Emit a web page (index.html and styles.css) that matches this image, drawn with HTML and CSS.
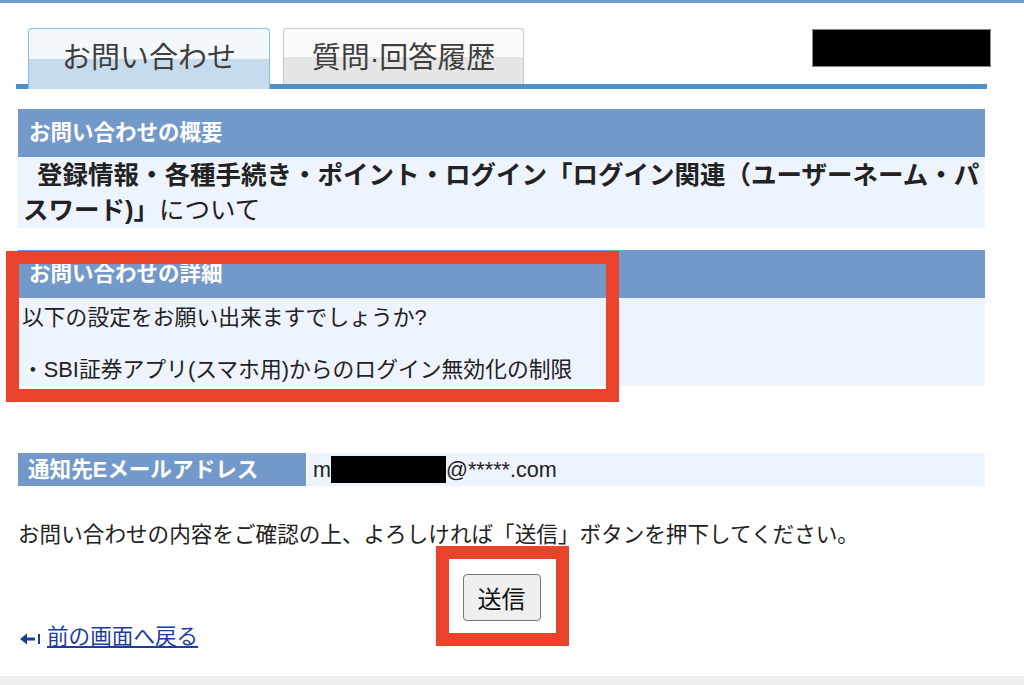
FILE: index.html
```html
<!DOCTYPE html>
<html>
<head>
    <meta charset="UTF-8">
    <title>お問い合わせ</title>
    <link rel="stylesheet" href="styles.css">
</head>
<body>
<div class="top_bar"></div>
<div class="page">
    <div class="tab_row">
        <div class="tab active">お問い合わせ</div>
        <div class="tab">質問·回答履歴</div>
        <div class="user_mask"></div>
    </div>

    <div class="section first">
        <div class="sec_title">お問い合わせの概要</div>
        <div class="sec_body summary">
            <b>登録情報・各種手続き・ポイント・ログイン「ログイン関連（ユーザーネーム・パ<br>スワード)」</b>について
        </div>
    </div>

    <div class="section detail">
        <div class="sec_title">お問い合わせの詳細</div>
        <div class="sec_body message">
            以下の設定をお願い出来ますでしょうか?<br>
            <br>
            ・SBI証券アプリ(スマホ用)からのログイン無効化の制限
        </div>
        <div class="red_mark detail_mark"></div>
    </div>

    <div class="mail_row">
        <div class="mail_label">通知先Eメールアドレス</div>
        <div class="mail_value">m<span class="mask"></span>@*****.com</div>
    </div>

    <p class="notice">お問い合わせの内容をご確認の上、よろしければ「送信」ボタンを押下してください。</p>

    <div class="submit_row">
        <span class="submit_wrap">
            <button class="submit" type="button">送信</button>
            <span class="red_mark button_mark"></span>
        </span>
    </div>

    <div class="back">
        <svg class="back_icon" width="21" height="14" viewBox="0 0 21 14">
            <path d="M0 7 L7 1.5 L7 12.5 Z" fill="#1d3d9b"/>
            <rect x="6" y="5.5" width="9" height="3" fill="#1d3d9b"/>
            <rect x="18" y="2" width="2" height="10" fill="#1d3d9b"/>
        </svg>
        <a href="#" class="back_link">前の画面へ戻る</a>
    </div>
</div>
<div class="bottom_bar"></div>
</body>
</html>
```

FILE: styles.css
```css
            body {
                margin: 0;
                font-family: "Liberation Sans", "Noto Sans CJK JP", sans-serif;
                color: #222;
                background: #fff;
                overflow: hidden;
            }
            .top_bar {
                height: 3px;
                background: #7399ca;
            }
            .page {
                width: 967px;
                margin-left: 18px;
            }
            /* tabs */
            .tab_row {
                display: flex;
                align-items: flex-start;
                width: 971px;
                height: 56px;
                margin-left: -2px;
                padding-top: 25px;
                border-bottom: 5px solid #4f8fc8;
            }
            .tab {
                box-sizing: border-box;
                width: 241px;
                height: 56px;
                margin-left: 13px;
                border: 1px solid #c9c9c9;
                border-bottom: none;
                border-radius: 4px 4px 0 0;
                background: linear-gradient(#fafafa 50%, #e6e6e6 50%);
                text-align: center;
                font-size: 29px;
                line-height: 58px;
                color: #3f3f3f;
            }
            .tab.active {
                width: 242px;
                height: 61px;
                margin-left: 12px;
                border-color: #8fbde0;
                background: linear-gradient(#f3f8fc 50%, #c6dcec 50%);
            }
            .user_mask {
                box-sizing: border-box;
                width: 179px;
                height: 38px;
                margin: 1px -4px 0 auto;
                background: #000;
                border: 1px solid #888;
            }
            /* sections */
            .section {
                position: relative;
            }
            .section.first {
                margin-top: 20px;
            }
            .section.detail {
                margin-top: 22px;
            }
            .sec_title {
                height: 48px;
                padding-left: 11px;
                background: #7399ca;
                color: #fff;
                font-weight: bold;
                font-size: 21.5px;
                line-height: 48px;
            }
            .sec_body {
                background: #edf4fd;
            }
            .summary {
                padding: 1px 0 0 5px;
                font-size: 25.5px;
                line-height: 35px;
                text-indent: 14px;
            }
            .summary b {
                font-weight: bold;
            }
            .message {
                padding: 7px 4px 3px 4px;
                font-size: 21.8px;
                line-height: 26px;
            }
            .red_mark {
                position: absolute;
                border: 13px solid #e9432b;
            }
            .detail_mark {
                left: -12px;
                top: 1px;
                width: 587px;
                height: 125px;
            }
            /* mail */
            .mail_row {
                display: flex;
                height: 33px;
                margin-top: 67px;
                font-size: 21.6px;
                line-height: 33px;
            }
            .mail_label {
                width: 278px;
                padding-left: 10px;
                background: #7399ca;
                color: #fff;
                font-weight: bold;
            }
            .mail_value {
                flex: 1;
                margin-left: 1px;
                padding-left: 6px;
                background: #edf4fd;
            }
            .mask {
                display: inline-block;
                width: 115px;
                height: 27px;
                background: #000;
                vertical-align: -6px;
            }
            .notice {
                margin: 34px 0 0 0;
                font-size: 21.6px;
                line-height: 30px;
            }
            /* submit */
            .submit_row {
                margin-top: 24px;
                text-align: center;
                height: 47px;
            }
            .submit_wrap {
                position: relative;
                display: inline-block;
                vertical-align: top;
            }
            .submit {
                display: block;
                width: 78px;
                height: 47px;
                padding: 0;
                background: #efefef;
                border: 1px solid #767676;
                border-radius: 4px;
                font-family: "Liberation Sans", "Noto Sans CJK JP", sans-serif;
                font-size: 24px;
                color: #111;
            }
            .button_mark {
                left: -27px;
                top: -28px;
                right: -28px;
                bottom: -25px;
            }
            /* back link */
            .back {
                display: flex;
                align-items: center;
                height: 32px;
                margin-left: 2px;
            }
            .back_icon {
                margin-right: 6px;
                margin-top: 3px;
            }
            .back_link {
                color: #1d3d9b;
                font-size: 21.6px;
                line-height: 32px;
                text-decoration: underline;
            }
            .bottom_bar {
                height: 20px;
                margin-top: 23px;
                background: #eeeeee;
            }
```
